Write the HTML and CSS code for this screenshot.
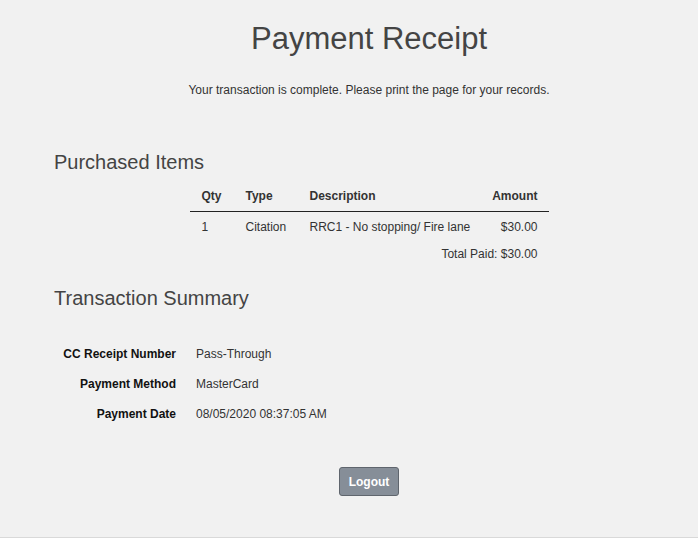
FILE: index.html
```html
<!DOCTYPE html>
<html lang="en">
  <head>
    <meta charset="UTF-8" />
    <meta name="viewport" content="width=device-width, initial-scale=1.0" />
    <title>Payment Receipt</title>
    <link rel="stylesheet" href="styles.css">
  </head>
  <body>
    <main class="receipt">
      <h1 class="receipt-title">Payment Receipt</h1>
      <p class="receipt-note">Your transaction is complete. Please print the page for your records.</p>

      <h2 class="section-title">Purchased Items</h2>
      <table class="items">
        <thead>
          <tr>
            <th class="col-qty">Qty</th>
            <th class="col-type">Type</th>
            <th class="col-desc">Description</th>
            <th class="col-amount">Amount</th>
          </tr>
        </thead>
        <tbody>
          <tr>
            <td class="col-qty">1</td>
            <td class="col-type">Citation</td>
            <td class="col-desc">RRC1 - No stopping/ Fire lane</td>
            <td class="col-amount">$30.00</td>
          </tr>
        </tbody>
        <tfoot>
          <tr>
            <td colspan="4" class="total">Total Paid: $30.00</td>
          </tr>
        </tfoot>
      </table>

      <h2 class="section-title">Transaction Summary</h2>
      <dl class="summary">
        <div class="summary-row">
          <dt>CC Receipt Number</dt>
          <dd>Pass-Through</dd>
        </div>
        <div class="summary-row">
          <dt>Payment Method</dt>
          <dd>MasterCard</dd>
        </div>
        <div class="summary-row">
          <dt>Payment Date</dt>
          <dd>08/05/2020 08:37:05 AM</dd>
        </div>
      </dl>

      <div class="actions">
        <button class="btn-logout" type="button">Logout</button>
      </div>
    </main>
  </body>
</html>
```

FILE: styles.css
```css
html {
  font-family: "Liberation Sans", Arial, sans-serif;
  font-size: 12px;
  background-color: #f1f1f1;
}
body {
  margin: 0;
  min-height: 537px;
  border-bottom: 1px solid #d9d9d9;
  color: #333;
}
.receipt {
  padding: 20px 0 0 40px;
}
.receipt-title {
  font-size: 31px;
  font-weight: normal;
  color: #444;
  text-align: center;
  margin: 0;
  line-height: 38px;
}
.receipt-note {
  text-align: center;
  margin: 24px 0 0;
  line-height: 16px;
}
.section-title {
  font-size: 20px;
  font-weight: normal;
  color: #444;
  margin: 0 0 0 14px;
  line-height: 24px;
}
.receipt-note + .section-title {
  margin-top: 52px;
}

/************************
  ITEMS TABLE
************************/
.items {
  border-collapse: collapse;
  margin: 8px auto 0;
  width: 359px;
  white-space: nowrap;
}
.items th,
.items td {
  text-align: left;
  padding: 7px 0;
  line-height: 16px;
}
.items th {
  font-weight: bold;
  padding: 6px 0 7px;
  border-bottom: 1px solid #222;
}
.items .col-qty {
  width: 44px;
  padding-left: 12px;
}
.items .col-type {
  width: 64px;
}
.items .col-amount,
.items .total {
  text-align: right;
  padding-right: 11px;
}
.items .total {
  padding-top: 4px;
}
.items + .section-title {
  margin-top: 17px;
}

/************************
  SUMMARY
************************/
.summary {
  margin: 29px 0 0;
}
.summary-row {
  display: flex;
  align-items: baseline;
  padding: 7px 0;
  line-height: 16px;
}
.summary dt {
  width: 136px;
  text-align: right;
  font-weight: bold;
  color: #111;
}
.summary dd {
  margin: 0 0 0 20px;
}

.actions {
  display: flex;
  justify-content: center;
  margin-top: 38px;
}
.btn-logout {
  font-family: inherit;
  font-size: 12px;
  font-weight: bold;
  color: #fff;
  background-color: #868e98;
  border: 1px solid #5f656d;
  border-radius: 3px;
  padding: 6.5px 8.5px;
  line-height: 14px;
}
```
